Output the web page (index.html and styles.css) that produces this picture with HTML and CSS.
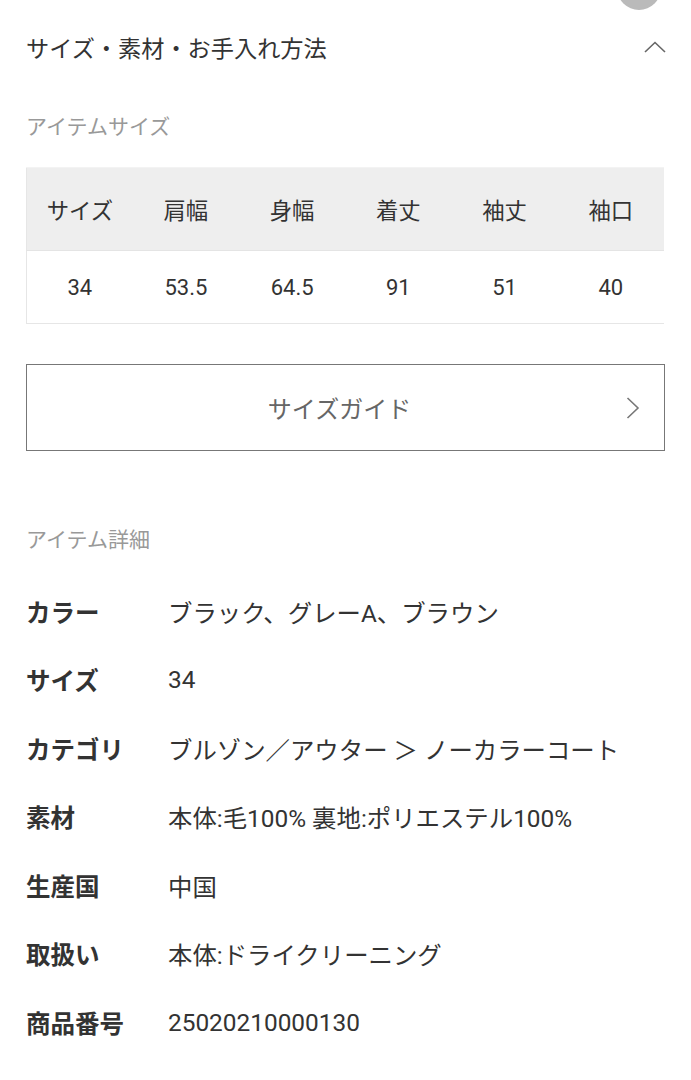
FILE: index.html
```html
<!DOCTYPE html>
<html lang="ja">
<head>
<meta charset="utf-8">
<title>サイズ・素材・お手入れ方法</title>
<link rel="stylesheet" href="styles.css">
</head>
<body>
<div class="fab"></div>
<div class="page">
  <div class="head">
    <h2 class="head-title">サイズ・素材・お手入れ方法</h2>
    <svg class="chev-up" width="22" height="12" viewBox="0 0 22 12"><polyline points="1,11 11,1.5 21,11" fill="none" stroke="#666" stroke-width="1.6"/></svg>
  </div>

  <div class="sub">アイテムサイズ</div>
  <table class="size-table">
    <thead>
      <tr><th>サイズ</th><th>肩幅</th><th>身幅</th><th>着丈</th><th>袖丈</th><th>袖口</th></tr>
    </thead>
    <tbody>
      <tr><td>34</td><td>53.5</td><td>64.5</td><td>91</td><td>51</td><td>40</td></tr>
    </tbody>
  </table>

  <a class="guide-btn" href="#">
    <span class="guide-text">サイズガイド</span>
    <svg class="chev-right" width="14" height="22" viewBox="0 0 14 22"><polyline points="1.5,1 12,11 1.5,21" fill="none" stroke="#777" stroke-width="1.6"/></svg>
  </a>

  <div class="sub sub-detail">アイテム詳細</div>
  <dl class="details">
    <div class="row"><dt>カラー</dt><dd>ブラック、グレーA、ブラウン</dd></div>
    <div class="row"><dt>サイズ</dt><dd>34</dd></div>
    <div class="row"><dt>カテゴリ</dt><dd>ブルゾン／アウター ＞ ノーカラーコート</dd></div>
    <div class="row"><dt>素材</dt><dd>本体:毛100% 裏地:ポリエステル100%</dd></div>
    <div class="row"><dt>生産国</dt><dd>中国</dd></div>
    <div class="row"><dt>取扱い</dt><dd>本体:ドライクリーニング</dd></div>
    <div class="row"><dt>商品番号</dt><dd>25020210000130</dd></div>
  </dl>
</div>
</body>
</html>
```
FILE: styles.css
```css
* { box-sizing: border-box; }
html, body { margin: 0; padding: 0; background: #fff; }
body {
  font-family: Roboto, "Noto Sans CJK JP", sans-serif;
  color: #333;
  overflow: hidden;
}
.fab {
  position: absolute;
  left: 617px;
  top: -34px;
  width: 44px;
  height: 44px;
  border-radius: 50%;
  background: #bababa;
}
.page {
  padding: 0 26px;
}
.head {
  height: 97px;
  display: flex;
  align-items: center;
  justify-content: space-between;
}
.head-title {
  margin: 0;
  font-size: 23.2px;
  font-weight: 400;
  line-height: 32px;
  color: #333;
}
.chev-up {
  margin-right: -1px;
  margin-top: -3px;
}
.sub {
  font-size: 21px;
  line-height: 30px;
  color: #999;
  margin-top: 15px;
  margin-bottom: 25px;
}
.size-table {
  width: 638px;
  border-collapse: collapse;
  table-layout: fixed;
  border-left: 1px solid #e6e6e6;
  border-bottom: 1px solid #e6e6e6;
}
.size-table th {
  height: 83px;
  background: #eeeeee;
  font-weight: 400;
  font-size: 22.4px;
  color: #333;
  text-align: center;
  border-top: 1px solid #f3f3f3;
  border-bottom: 1px solid #e4e4e4;
  padding: 0;
}
.size-table td {
  height: 73px;
  font-size: 22px;
  color: #333;
  text-align: center;
  padding: 0;
}
.guide-btn {
  margin-top: 40px;
  height: 87px;
  border: 1px solid #777;
  display: flex;
  align-items: center;
  justify-content: center;
  padding-right: 12px;
  position: relative;
  text-decoration: none;
}
.guide-text {
  font-size: 24px;
  color: #666;
}
.chev-right {
  position: absolute;
  right: 24px;
  top: 32px;
}
.sub-detail {
  margin-top: 74px;
  margin-bottom: 22px;
}
.details {
  margin: 0;
}
.row {
  display: flex;
  align-items: center;
  height: 68.5px;
}
.row dt {
  width: 142px;
  flex: none;
  font-size: 24.5px;
  font-weight: 700;
  color: #333;
}
.row dd {
  margin: 0;
  font-size: 24.4px;
  color: #333;
}
```
